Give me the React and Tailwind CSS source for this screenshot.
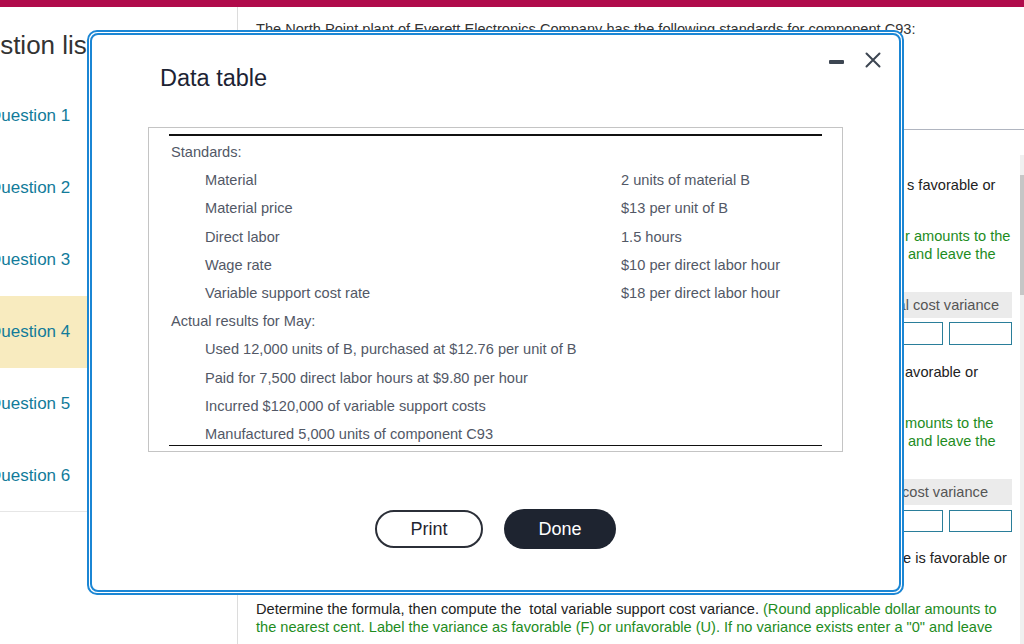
import React from 'react'

const questions = [1, 2, 3, 4, 5, 6]

const rows = [
  { label: 'Standards:' },
  { label: 'Material', value: '2 units of material B', indent: true },
  { label: 'Material price', value: '$13 per unit of B', indent: true },
  { label: 'Direct labor', value: '1.5 hours', indent: true },
  { label: 'Wage rate', value: '$10 per direct labor hour', indent: true },
  { label: 'Variable support cost rate', value: '$18 per direct labor hour', indent: true },
  { label: 'Actual results for May:' },
  { label: 'Used 12,000 units of B, purchased at $12.76 per unit of B', indent: true },
  { label: 'Paid for 7,500 direct labor hours at $9.80 per hour', indent: true },
  { label: 'Incurred $120,000 of variable support costs', indent: true },
  { label: 'Manufactured 5,000 units of component C93', indent: true },
]

const Sidebar = () => (
  <div className="w-[238px] shrink-0 border-r border-[#dcdcdc] overflow-hidden">
    <div className="h-[73px] pt-[23px]">
      <h2 className="ml-[-49px] text-[26px] leading-[30px] text-[#333] whitespace-nowrap">Question list</h2>
    </div>
    {questions.map((q) => (
      <div
        key={q}
        className={`h-[72px] flex items-center ${q === 4 ? 'bg-[#f8ebbf]' : ''} ${q === 6 ? 'border-b border-[#e6e6e6]' : ''}`}
      >
        <span className="ml-[-12px] text-[17px] text-[#127b9a] whitespace-nowrap">Question {q}</span>
      </div>
    ))}
  </div>
)

const InputPair = ({ className }) => (
  <div className={`flex justify-end gap-[6px] ${className}`}>
    <div className="w-[63px] h-full border border-[#2a7e9a]"></div>
    <div className="w-[63px] h-full border border-[#2a7e9a]"></div>
  </div>
)

const MainContent = () => (
  <div className="flex-1 flex flex-col min-w-0 overflow-hidden">
    {/* Question header */}
    <div className="h-[123px] shrink-0 border-b border-[#b0b5c0] pt-[13px] pl-[18px]">
      <p className="text-[14.6px] leading-[18px] text-[#333] whitespace-nowrap">
        The North Point plant of Everett Electronics Company has the following standards for component C93:
      </p>
    </div>

    <div className="flex flex-1 min-h-0">
      <div className="w-[774px] shrink-0 pl-[18px] text-[14.6px] leading-[18px]">
        <p className="mt-[46px] pl-[651px] whitespace-nowrap text-[#222]">s favorable or</p>
        <div className="mt-[33px] pl-[649px] whitespace-nowrap text-[#1e8c1e]">
          <p>r amounts to the</p>
          <p className="pl-[3px]">and leave the</p>
        </div>
        <div className="mt-[29px] h-[26px] bg-[#ebebeb] flex items-center justify-end pr-[13px] text-[#555] whitespace-nowrap">
          Direct material cost variance
        </div>
        <InputPair className="mt-[4px] h-[23px]" />
        <p className="mt-[18px] pl-[649px] whitespace-nowrap text-[#222]">avorable or</p>
        <div className="mt-[33px] pl-[649px] whitespace-nowrap text-[#1e8c1e]">
          <p>mounts to the</p>
          <p className="pl-[3px]">and leave the</p>
        </div>
        <div className="mt-[29px] h-[26px] bg-[#ebebeb] flex items-center justify-end pr-[24px] text-[#555] whitespace-nowrap">
          Direct labor cost variance
        </div>
        <InputPair className="mt-[5px] h-[22px]" />
        <p className="mt-[17px] pl-[647px] whitespace-nowrap text-[#222]">e is favorable or</p>
        <p className="mt-[33px] text-[#222]">
          Determine the formula, then compute the&nbsp; total variable support cost variance.{' '}
          <span className="text-[#1e8c1e]">
            (Round applicable dollar amounts to the nearest cent. Label the variance as favorable (F) or unfavorable (U). If no variance exists enter a "0" and leave
          </span>
        </p>
      </div>
      <div className="ml-auto w-[4px] shrink-0 mt-[25px] bg-[#f0f0f0]">
        <div className="mt-[20px] h-[120px] bg-[#c6c6c6]"></div>
      </div>
    </div>
  </div>
)

const DataTableModal = () => (
  <div className="absolute left-[87px] top-[30px] w-[817px] h-[565px] rounded-[10px] border-2 border-[#1b86d4] p-px bg-white">
    <div className="relative h-full rounded-[8px] border-2 border-[#1b86d4] flex flex-col">
      <div className="absolute right-[18px] top-[17px] flex items-center gap-[21px]">
        <div className="mt-[4px] w-[15px] h-[4px] rounded-[1px] bg-[#3d4652]"></div>
        <svg width="16" height="16" viewBox="0 0 16 16" fill="none" stroke="#3d4652" strokeWidth="2" strokeLinecap="round">
          <path d="M1.5 1.5 L14.5 14.5 M14.5 1.5 L1.5 14.5" />
        </svg>
      </div>

      <h1 className="pt-[30px] pl-[68px] text-[23.5px] leading-[27px] text-[#1c2333]">Data table</h1>

      <div className="mt-[35px] ml-[56px] w-[695px] h-[325px] border border-[#c4c4c4] pt-[6px]">
        <div className="mx-[20px]">
          <div className="h-[1.5px] bg-[#111]"></div>
          <div className="pt-[3.4px]">
            {rows.map((r, i) => (
              <div key={i} className="h-[28.2px] flex items-center text-[14.6px] text-[#525866] whitespace-nowrap">
                <div className={`w-[452px] shrink-0 ${r.indent ? 'pl-[36px]' : 'pl-[2px]'}`}>{r.label}</div>
                {r.value && <div>{r.value}</div>}
              </div>
            ))}
          </div>
          <div className="mt-[-4px] h-[1.5px] bg-[#111]"></div>
        </div>
      </div>

      <div className="mt-[57px] flex items-center justify-center gap-[21px]">
        <button className="w-[108px] h-[38px] rounded-full border-2 border-[#2b2f38] bg-white text-[18px] text-[#1f2430]">
          Print
        </button>
        <button className="w-[112px] h-[40px] rounded-full bg-[#1e2430] text-[18px] text-white">Done</button>
      </div>
    </div>
  </div>
)

const App = () => {
  return (
    <div className="relative w-[1024px] h-[644px] overflow-hidden bg-white font-['Liberation_Sans',Arial,sans-serif]">
      <div className="h-[7px] bg-[#b00b4b]"></div>
      <div className="flex h-[637px]">
        <Sidebar />
        <MainContent />
      </div>
      <DataTableModal />
    </div>
  )
}

export default App
